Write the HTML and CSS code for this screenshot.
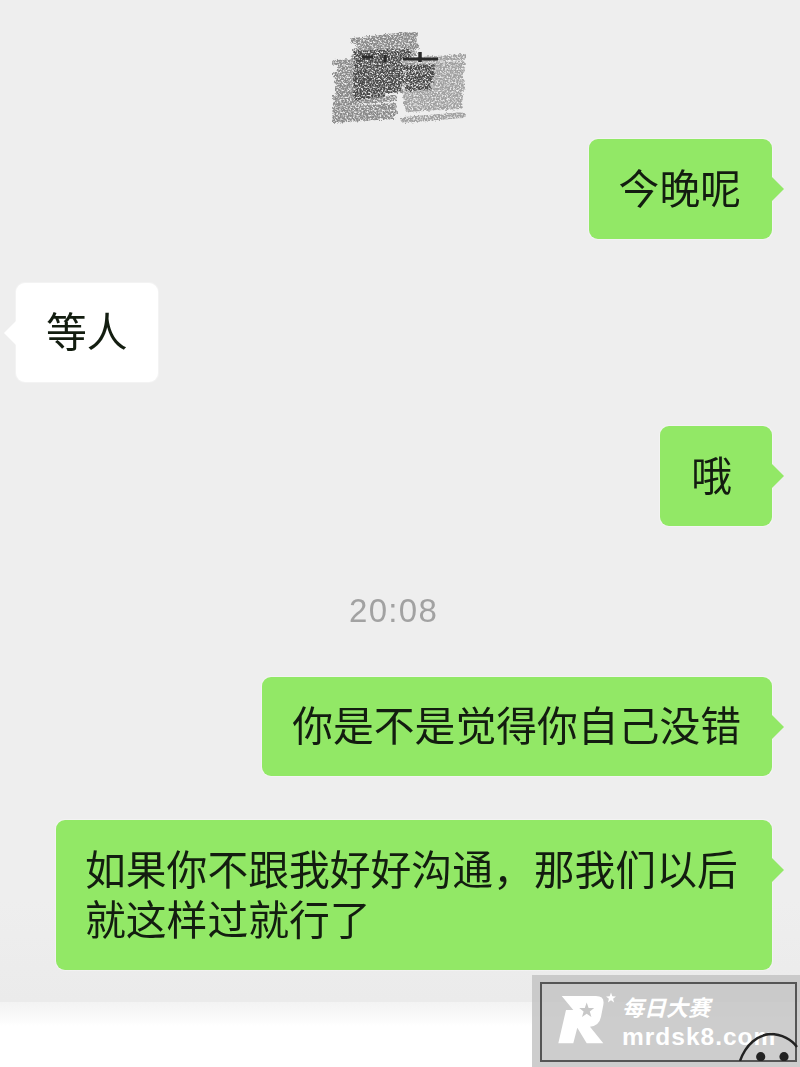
FILE: index.html
```html
<!DOCTYPE html>
<html lang="zh">
<head>
<meta charset="utf-8">
<title>聊天</title>
<link rel="stylesheet" href="styles.css">
</head>
<body>
<div class="screen">
  <header class="head">
    <svg class="scribble" width="134" height="92" viewBox="0 0 134 92" aria-hidden="true">
      <defs>
        <filter id="grain" x="-5%" y="-5%" width="110%" height="110%">
          <feTurbulence type="fractalNoise" baseFrequency="0.6" numOctaves="2" seed="7" result="n"/>
          <feColorMatrix in="n" type="matrix" values="0 0 0 0 0  0 0 0 0 0  0 0 0 0 0  3.4 0 0 0 -0.9" result="mask"/>
          <feDisplacementMap in="SourceGraphic" in2="n" scale="4" result="d"/>
          <feComposite in="d" in2="mask" operator="in"/>
          <feGaussianBlur stdDeviation="0.65"/>
        </filter>
      </defs>
      <g filter="url(#grain)" fill="none" stroke-linecap="round">
        <g stroke="#8a8a8a" stroke-width="6">
          <path d="M21 9 L83 2"/><path d="M27 13 L82 8"/><path d="M24 19 L84 14"/>
          <path d="M22 25 L82 21"/><path d="M3 31 L78 27"/><path d="M8 37 L80 33"/>
          <path d="M4 43 L74 39"/><path d="M5 49 L74 45"/><path d="M6 55 L72 52"/>
          <path d="M6 60 L68 58"/><path d="M3 66 L30 64"/><path d="M4 72 L62 66"/>
          <path d="M3 78 L62 74"/><path d="M2 84 L62 80"/><path d="M1 88 L60 84"/>
        </g>
        <g stroke="#4a4a4a" stroke-width="6">
          <path d="M25 22 L76 20"/><path d="M25 28 L76 26"/><path d="M25 34 L76 32"/>
          <path d="M24 41 L74 39"/><path d="M24 47 L74 45"/><path d="M24 53 L72 51"/>
          <path d="M24 60 L66 57"/><path d="M24 65 L50 62"/>
        </g>
        <g stroke="#a0a0a0" stroke-width="6">
          <path d="M72 29 L132 25"/><path d="M76 35 L130 32"/><path d="M74 41 L130 38"/>
          <path d="M76 47 L128 44"/><path d="M74 53 L130 50"/><path d="M74 59 L130 56"/>
          <path d="M74 65 L128 62"/><path d="M74 71 L128 68"/><path d="M76 77 L128 74"/>
          <path d="M72 88 L131 83"/>
        </g>
        <g stroke="#454545" stroke-width="6">
          <path d="M76 36 L100 35"/><path d="M76 43 L100 42"/><path d="M76 49 L98 48"/><path d="M76 56 L96 55"/>
        </g>
      </g>
      <g class="scribble-ink" fill="none" stroke="#2a2a2a">
        <path d="M71 27 L106 27" stroke-width="3"/><path d="M88 20 L88 30" stroke-width="3.5"/>
        <path d="M30 25 L41 25" stroke-width="3"/><path d="M53 23 L53 30" stroke-width="3"/>
      </g>
    </svg>
  </header>

  <main class="chat">
    <div class="row row-me"><div class="bubble me">今晚呢</div></div>
    <div class="row row-them"><div class="bubble them">等人</div></div>
    <div class="row row-me"><div class="bubble me single">哦</div></div>
    <div class="time">20:08</div>
    <div class="row row-me"><div class="bubble me">你是不是觉得你自己没错</div></div>
    <div class="row row-me"><div class="bubble me full">如果你不跟我好好沟通，那我们以后<br>就这样过就行了</div></div>
  </main>

  <footer class="foot"></footer>

  <aside class="mark">
    <div class="mark-box">
      <svg class="mark-logo" width="64" height="58" viewBox="0 0 64 58" aria-hidden="true">
        <path d="M6.7 6 L41 6 Q50 6 48.3 15 L46 26.7 Q44.3 35.7 35 36.7 L48.3 53.3 L31.7 53.3 L22.3 37.7 L18.3 53.3 L3.3 53.3 L11 20 L18.3 20 Z" fill="#fff"/>
        <path d="M31.7 12.5 L33.6 18 L39.2 18 L34.8 21.6 L36.4 27 L31.7 23.8 L27 27 L28.6 21.6 L24.2 18 L29.8 18 Z" fill="#c8c8c8"/>
        <path d="M56 2.5 L57.3 6.3 L61 6.4 L58.1 8.7 L59.1 12.5 L56 10.3 L52.9 12.5 L53.9 8.7 L51 6.4 L54.7 6.3 Z" fill="#fff"/>
      </svg>
      <div class="mark-text">
        <div class="mark-cn">每日大赛</div>
        <div class="mark-url">mrdsk8.com</div>
      </div>
    </div>
    <svg class="mark-face" width="64" height="31" viewBox="0 0 64 31" aria-hidden="true">
      <path d="M4 31 C10 14 22 5 34 4 C46 4 56 10 61 17" fill="none" stroke="#222" stroke-width="2.4"/>
      <circle cx="24.7" cy="26.7" r="4.6" fill="#222"/>
      <circle cx="48" cy="26.7" r="4.6" fill="#222"/>
    </svg>
  </aside>
</div>
</body>
</html>
```

FILE: styles.css
```css
* { box-sizing: border-box; }
html, body { margin: 0; padding: 0; }
body {
  background: #fff;
  font-family: "Noto Sans CJK SC", "Noto Sans", sans-serif;
}
.screen {
  position: relative;
  width: 800px;
  height: 1067px;
  overflow: hidden;
  display: flex;
  flex-direction: column;
  background: linear-gradient(#eeeeee 0, #eeeeee 900px, #ebebeb 1002px);
}
.head {
  height: 139px;
  padding: 32px 0 0 332px;
  flex: none;
}
.scribble { display: block; }
.scribble-ink { filter: blur(0.7px); }
.chat {
  height: 863px;
  flex: none;
  display: flex;
  flex-direction: column;
  padding: 0 28px 0 16px;
}
.row { display: flex; flex: none; margin-bottom: 44px; }
.row-me { justify-content: flex-end; }
.row-them { justify-content: flex-start; }
.bubble {
  position: relative;
  font-size: 40.8px;
  line-height: 50px;
  color: #131d10;
  padding: 22.5px 30px 27px;
  border-radius: 9px;
  white-space: nowrap;
  box-shadow: 0 0 1px 1px rgba(255, 255, 255, 0.35);
  filter: blur(0.4px);
}
.me { background: #92e866; padding-left: 30px; padding-right: 31px; }
.them { background: #fff; }
.single { padding-left: 31px; padding-right: 40px; }
.full { width: 716px; padding-left: 29px; padding-right: 29px; }
.me::after,
.them::before {
  content: "";
  position: absolute;
  top: 38px;
  border-style: solid;
  border-color: transparent;
}
.me::after {
  left: 100%;
  border-width: 12px 0 12px 12px;
  border-left-color: #92e866;
}
.them::before {
  right: 100%;
  border-width: 12px 12px 12px 0;
  border-right-color: #fff;
}
.time {
  flex: none;
  height: 107px;
  padding-left: 333px;
  font-family: "Liberation Sans", sans-serif;
  font-size: 33px;
  line-height: 81px;
  color: #a2a2a2;
  letter-spacing: 1.3px;
  filter: blur(0.5px);
}
.foot {
  flex: 1;
  background: linear-gradient(#f3f3f3 0, #fafafa 16px, #fff 24px);
}
.mark {
  position: absolute;
  left: 532px;
  top: 975px;
  width: 268px;
  height: 92px;
  background: rgba(196, 196, 196, 0.85);
  padding: 7px 0 0 8px;
}
.mark-box {
  position: relative;
  width: 257px;
  height: 80px;
  border: 2px solid #555;
}
.mark-logo {
  position: absolute;
  left: 13px;
  top: 6px;
}
.mark-text {
  position: absolute;
  left: 80px;
  top: 8px;
  color: #fff;
}
.mark-cn {
  font-size: 22px;
  line-height: 28px;
  font-style: italic;
  font-weight: 700;
}
.mark-url {
  font-family: "Liberation Sans", sans-serif;
  font-weight: 700;
  font-size: 24.5px;
  line-height: 28px;
  letter-spacing: 1px;
  margin-top: 3px;
}
.mark-face {
  position: absolute;
  left: 204px;
  top: 55px;
}
```
